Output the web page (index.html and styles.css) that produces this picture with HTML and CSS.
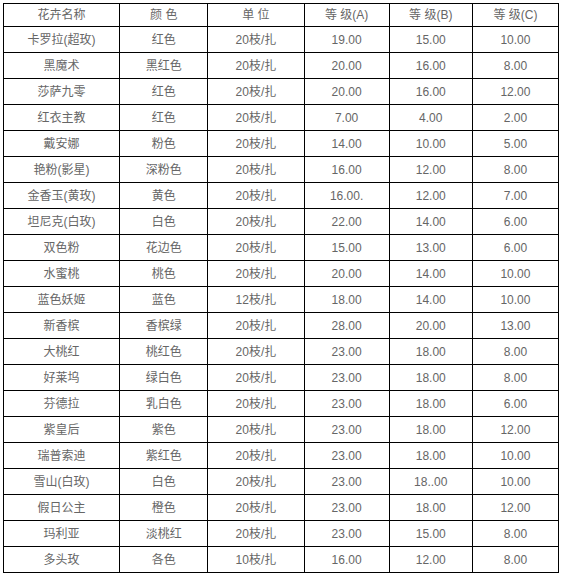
FILE: index.html
```html
<!DOCTYPE html>
<html>
<head>
<meta charset="utf-8">
<link rel="stylesheet" href="styles.css">
</head>
<body>
<table class="price">
<colgroup>
<col class="c1"><col class="c2"><col class="c3"><col class="c4"><col class="c5"><col class="c6">
</colgroup>
<tr class="head"><td>花卉名称</td><td>颜&nbsp;色</td><td>单&nbsp;位</td><td>等&nbsp;级(A)</td><td>等&nbsp;级(B)</td><td>等&nbsp;级(C)</td></tr>
<tr><td>卡罗拉(超玫)</td><td>红色</td><td>20枝/扎</td><td>19.00</td><td>15.00</td><td>10.00</td></tr>
<tr><td>黑魔术</td><td>黑红色</td><td>20枝/扎</td><td>20.00</td><td>16.00</td><td>8.00</td></tr>
<tr><td>莎萨九零</td><td>红色</td><td>20枝/扎</td><td>20.00</td><td>16.00</td><td>12.00</td></tr>
<tr><td>红衣主教</td><td>红色</td><td>20枝/扎</td><td>7.00</td><td>4.00</td><td>2.00</td></tr>
<tr><td>戴安娜</td><td>粉色</td><td>20枝/扎</td><td>14.00</td><td>10.00</td><td>5.00</td></tr>
<tr><td>艳粉(影星)</td><td>深粉色</td><td>20枝/扎</td><td>16.00</td><td>12.00</td><td>8.00</td></tr>
<tr><td>金香玉(黄玫)</td><td>黄色</td><td>20枝/扎</td><td>16.00.</td><td>12.00</td><td>7.00</td></tr>
<tr><td>坦尼克(白玫)</td><td>白色</td><td>20枝/扎</td><td>22.00</td><td>14.00</td><td>6.00</td></tr>
<tr><td>双色粉</td><td>花边色</td><td>20枝/扎</td><td>15.00</td><td>13.00</td><td>6.00</td></tr>
<tr><td>水蜜桃</td><td>桃色</td><td>20枝/扎</td><td>20.00</td><td>14.00</td><td>10.00</td></tr>
<tr><td>蓝色妖姬</td><td>蓝色</td><td>12枝/扎</td><td>18.00</td><td>14.00</td><td>10.00</td></tr>
<tr><td>新香槟</td><td>香槟绿</td><td>20枝/扎</td><td>28.00</td><td>20.00</td><td>13.00</td></tr>
<tr><td>大桃红</td><td>桃红色</td><td>20枝/扎</td><td>23.00</td><td>18.00</td><td>8.00</td></tr>
<tr><td>好莱坞</td><td>绿白色</td><td>20枝/扎</td><td>23.00</td><td>18.00</td><td>8.00</td></tr>
<tr><td>芬德拉</td><td>乳白色</td><td>20枝/扎</td><td>23.00</td><td>18.00</td><td>6.00</td></tr>
<tr><td>紫皇后</td><td>紫色</td><td>20枝/扎</td><td>23.00</td><td>18.00</td><td>12.00</td></tr>
<tr><td>瑞普索迪</td><td>紫红色</td><td>20枝/扎</td><td>23.00</td><td>18.00</td><td>10.00</td></tr>
<tr><td>雪山(白玫)</td><td>白色</td><td>20枝/扎</td><td>23.00</td><td>18..00</td><td>10.00</td></tr>
<tr><td>假日公主</td><td>橙色</td><td>20枝/扎</td><td>23.00</td><td>18.00</td><td>12.00</td></tr>
<tr><td>玛利亚</td><td>淡桃红</td><td>20枝/扎</td><td>23.00</td><td>15.00</td><td>8.00</td></tr>
<tr><td>多头玫</td><td>各色</td><td>10枝/扎</td><td>16.00</td><td>12.00</td><td>8.00</td></tr>
</table>
</body>
</html>
```
FILE: styles.css
```css
html, body {
  margin: 0;
  padding: 0;
  background: #fff;
}
.price {
  margin: 3px 0 0 3px;
  border-collapse: collapse;
  table-layout: fixed;
  width: 556px;
  font-family: "Liberation Sans", "Noto Sans CJK SC", sans-serif;
  font-size: 12px;
  color: #666;
}
.c1 { width: 116px; }
.c2 { width: 88px; }
.c3 { width: 96px; }
.c4 { width: 85px; }
.c5 { width: 83px; }
.c6 { width: 86px; }
.price td {
  border: 1px solid #000;
  text-align: center;
  vertical-align: middle;
  height: 25px;
  padding: 0;
  line-height: 14px;
}
.price .head td {
  height: 22px;
}
```
